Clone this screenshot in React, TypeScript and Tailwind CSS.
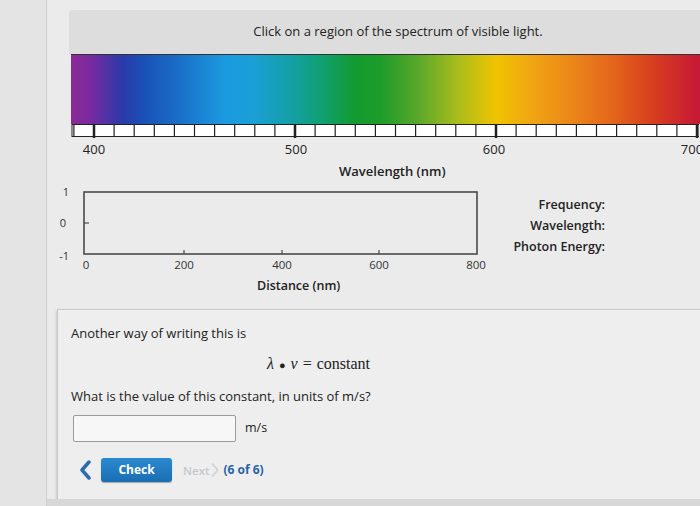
import React from 'react'

const spectrum =
  'linear-gradient(90deg, #8a2a96 0%, #7a2aa0 3%, #2a3aa8 8%, #1a4fb6 11%, #1a70c8 17%, #1b9be0 24%, #1a9fd8 28%, #14a0a8 34%, #10a070 39%, #129b30 44%, #1c9c2a 48%, #5aa82a 54%, #a8bc1c 60%, #f0c400 66%, #f0a810 71%, #ec8a18 77%, #e4661c 84%, #d8401e 90%, #c81a34 97%, #c01838 100%)'

function Chevron({ color, w = 12, h = 20, sw = 3.5, right = false }: { color: string; w?: number; h?: number; sw?: number; right?: boolean }) {
  return (
    <svg width={w} height={h} viewBox="0 0 12 20">
      <polyline
        points={right ? '2,2 9,10 2,18' : '10,2 3,10 10,18'}
        fill="none"
        stroke={color}
        strokeWidth={sw}
        strokeLinejoin="round"
        strokeLinecap="round"
      />
    </svg>
  )
}

function Ruler() {
  const ticks: number[] = []
  for (let nm = 390; nm <= 700; nm += 10) ticks.push(nm)
  return (
    <svg width={628} height={14} className="block">
      <rect x={1} y={0.5} width={627} height={12} fill="#ffffff" stroke="#222" strokeWidth={1} />
      {ticks.map((nm) => {
        const x = 23 + (nm - 400) * 2.01
        const major = nm % 100 === 0
        return (
          <line key={nm} x1={x} x2={x} y1={0} y2={major ? 14 : 13} stroke="#222" strokeWidth={major ? 2.5 : 1.2} />
        )
      })}
    </svg>
  )
}

function Graph() {
  const xt = [
    { v: '0', x: 30 },
    { v: '200', x: 130 },
    { v: '400', x: 228 },
    { v: '600', x: 325 },
    { v: '800', x: 422 },
  ]
  const o = 6
  return (
    <svg width={440} height={94} className="block" style={{ fontFamily: '"Open Sans", sans-serif' }}>
      <rect x={30} y={6 + o} width={393} height={62} fill="none" stroke="#4a4a4a" strokeWidth={1.6} />
      <line x1={30} x2={35} y1={37 + o} y2={37 + o} stroke="#4a4a4a" strokeWidth={1.2} />
      {xt.slice(1, 4).map((t) => (
        <line key={t.v} x1={t.x} x2={t.x} y1={64 + o} y2={68 + o} stroke="#4a4a4a" strokeWidth={1.2} />
      ))}
      <text x={15} y={10 + o} fontSize={11} textAnchor="end" fill="#333">1</text>
      <text x={12} y={41 + o} fontSize={11} textAnchor="end" fill="#333">0</text>
      <text x={15} y={74 + o} fontSize={11} textAnchor="end" fill="#333">-1</text>
      {xt.map((t) => (
        <text key={t.v} x={t.v === '0' ? t.x + 2 : t.x} y={83 + o} fontSize={11.5} textAnchor="middle" fill="#333">
          {t.v}
        </text>
      ))}
    </svg>
  )
}

export default function App() {
  return (
    <div className="w-[700px] h-[506px] flex bg-[#e6e6e6] text-[#222] font-['Open_Sans',sans-serif] overflow-hidden">
      <div className="w-[47px] shrink-0 bg-[#e4e4e4] border-r border-[#cdcdcd]" />
      <div className="flex-1 flex flex-col bg-[#ebebeb]">
        {/* spectrum area */}
        <div className="pl-[22px] pt-[10px]">
          <div className="h-[44px] bg-[#dddddd] rounded-tl-[4px] flex items-center justify-center text-[13px] pl-[12px]">
            Click on a region of the spectrum of visible light.
          </div>
          <div className="ml-[2px] h-[70px] border-t border-[#333]" style={{ background: spectrum }} />
          <div className="ml-[2px]">
            <Ruler />
          </div>
          <div className="ml-[2px] flex text-[13px] leading-[20px] h-[20px] mt-[1px]">
            <div className="w-[46px] text-center">400</div>
            <div className="w-[46px] ml-[156px] text-center">500</div>
            <div className="w-[46px] ml-[152px] text-center">600</div>
            <div className="w-[46px] ml-[152px] text-center">700</div>
          </div>
          <div className="h-[21px] flex items-end pl-[270px] text-[13px] font-semibold leading-[18px]">Wavelength (nm)</div>
        </div>

        {/* graph + readouts */}
        <div className="flex">
          <div className="ml-[7px] w-[440px] flex flex-col">
            <Graph />
            <div className="h-[24px] flex items-center pl-[203px] text-[12.5px] font-semibold">Distance (nm)</div>
          </div>
          <div className="ml-[1px] w-[110px] flex flex-col items-end pt-[14px] text-[12.5px] font-semibold leading-[21px]">
            <div>Frequency:</div>
            <div>Wavelength:</div>
            <div>Photon Energy:</div>
          </div>
        </div>

        {/* question panel */}
        <div className="mt-[11px] ml-[10px] h-[190px] bg-[#eeeeee] border-t border-l border-[#c9c9c9] pl-[13px] pt-[13px] text-[13px] shadow-[0_2px_3px_rgba(0,0,0,0.25)]">
          <div className="leading-[20px]">Another way of writing this is</div>
          <div className="mt-[11px] pl-[196px] leading-[20px] text-[16px] font-['Liberation_Serif',serif]">
            <span className="italic">λ</span>
            <span className="mx-[5px] text-[11px] align-middle">●</span>
            <span className="italic">v</span>
            <span className="mx-[5px]">=</span>
            <span>constant</span>
          </div>
          <div className="mt-[11px] leading-[20px]">What is the value of this constant, in units of m/s?</div>
          <div className="mt-[9px] flex items-center">
            <div className="ml-[2px] w-[163px] h-[27px] bg-[#f7f7f7] border border-[#9a9a9a] rounded-[2px]" />
            <div className="ml-[9px] text-[12.5px]">m/s</div>
          </div>
          <div className="mt-[16px] flex items-center">
            <div className="ml-[8px]">
              <Chevron color="#2b6cb0" />
            </div>
            <div className="ml-[10px] w-[71px] h-[24px] rounded-[3px] bg-gradient-to-b from-[#2b8ad2] to-[#1a6db2] flex items-center justify-center text-white text-[12px] font-bold shadow-[0_1px_1px_rgba(0,0,0,0.3)]">
              Check
            </div>
            <div className="ml-[11px] text-[11.5px] text-[#c4c8cc] font-semibold">Next</div>
            <div className="ml-[1px]">
              <Chevron color="#cfd2d6" w={9} h={18} sw={2.5} right />
            </div>
            <div className="ml-[4px] text-[12px] font-bold text-[#2a62a8]">(6 of 6)</div>
          </div>
        </div>
        <div className="flex-1 bg-[#d8d8d8]" />
      </div>
    </div>
  )
}
